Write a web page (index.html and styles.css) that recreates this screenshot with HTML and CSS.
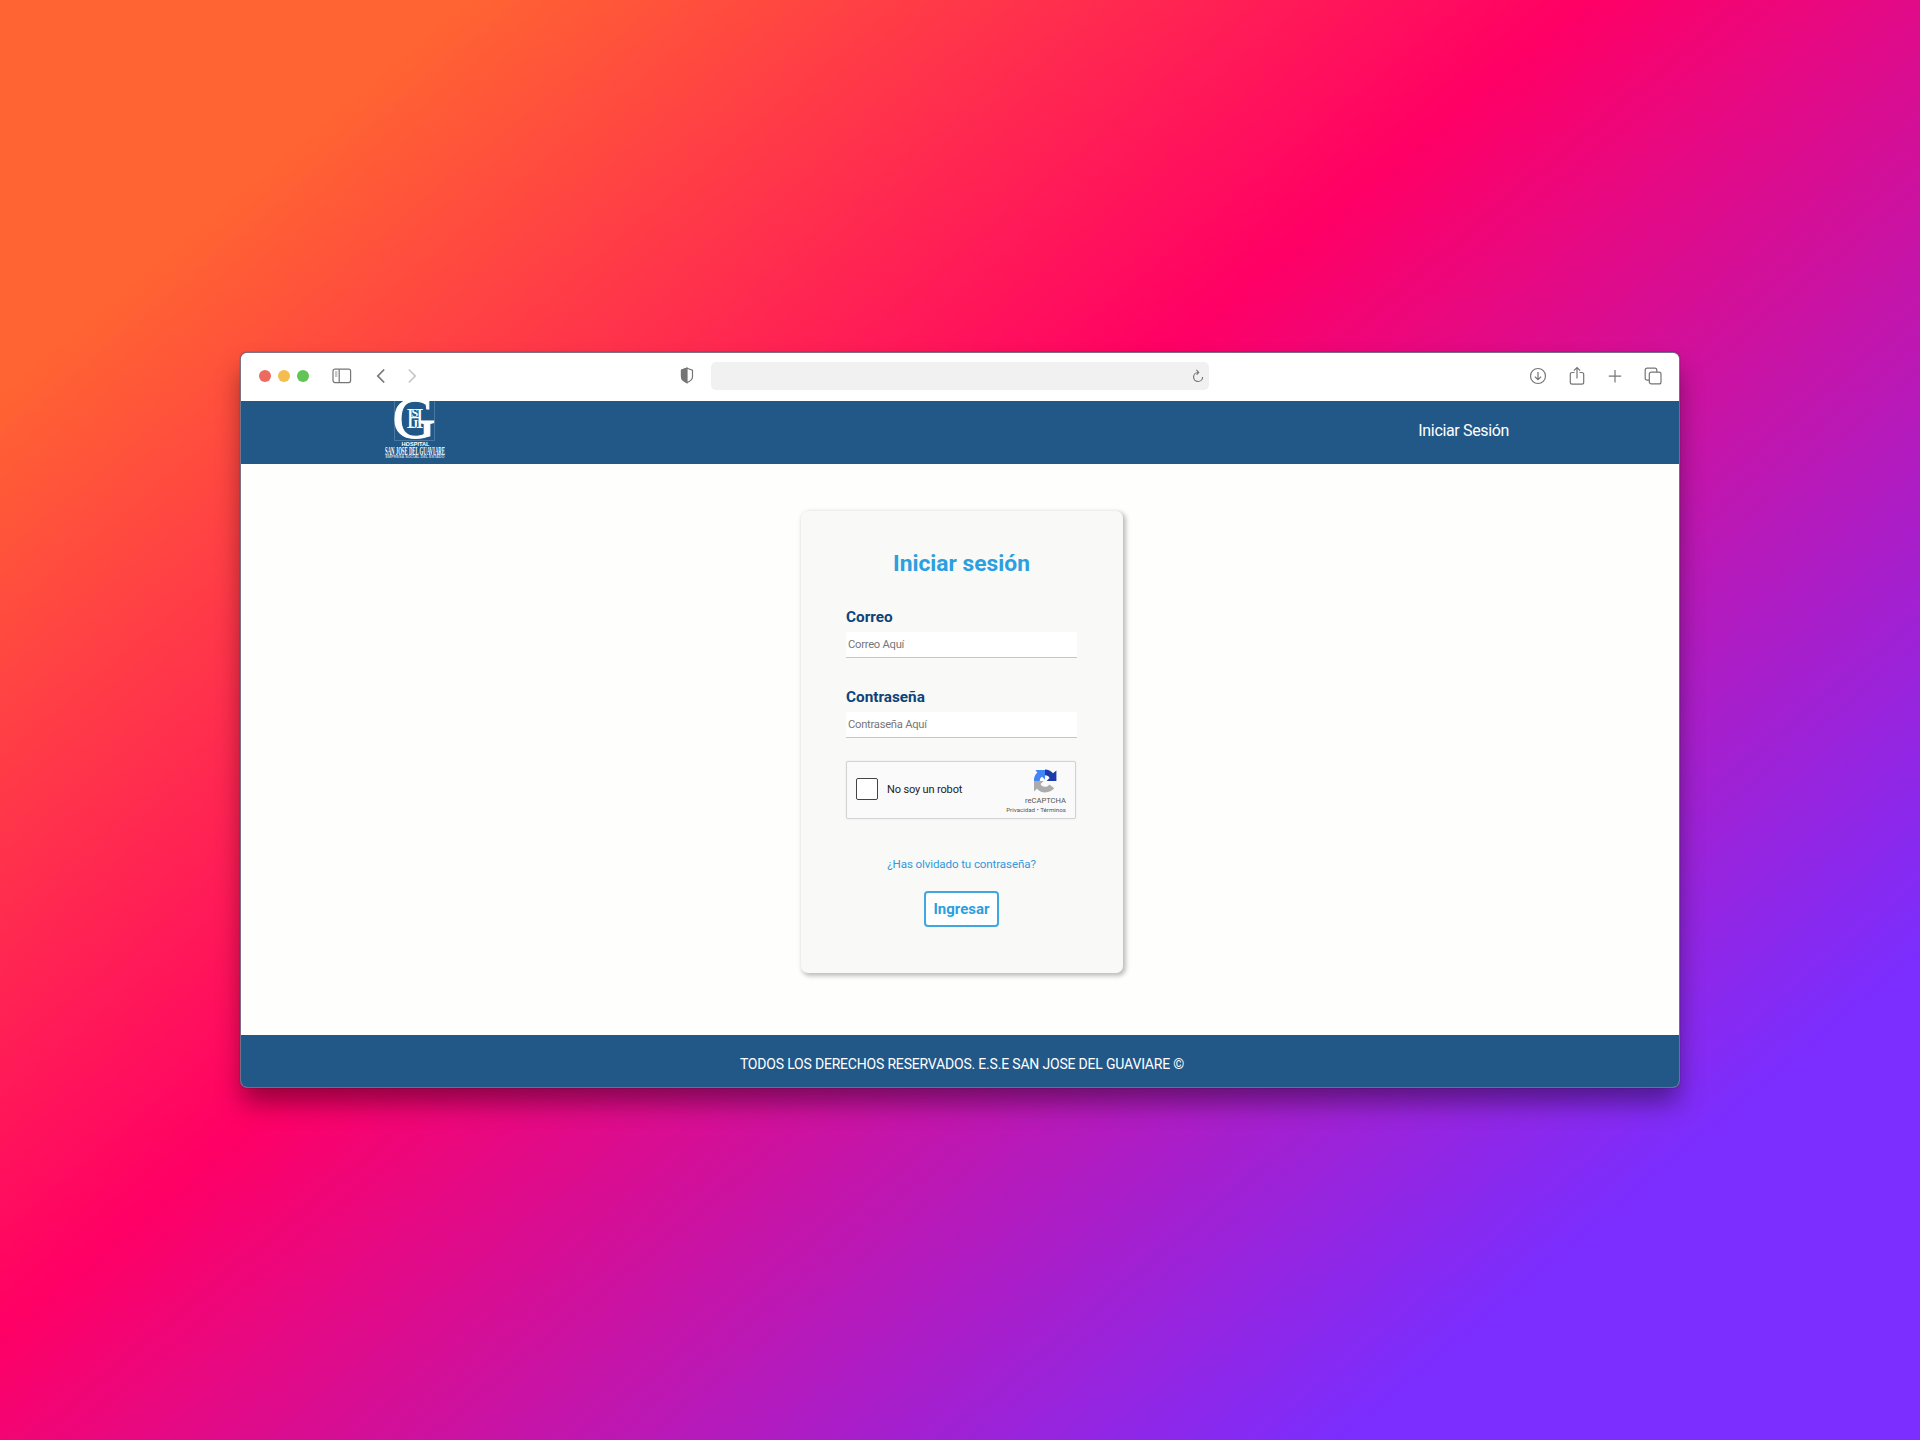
FILE: index.html
```html
<!DOCTYPE html>
<html lang="es">
<head>
<meta charset="utf-8">
<title>Iniciar sesión</title>
<link rel="stylesheet" href="styles.css">
</head>
<body>
<div class="window">
  <div class="toolbar">
    <div class="lights"><i class="light red"></i><i class="light yellow"></i><i class="light green"></i></div>
    <svg class="sidebar-icon" width="20" height="16" viewBox="0 0 20 16"><rect x="1" y="1.2" width="17.6" height="13.4" rx="2"/><path d="M7.2 1.2v13.4"/><path class="thin" d="M3 4h2.4M3 6h2.4M3 8h2.4"/></svg>
    <svg class="back-icon" width="10" height="16" viewBox="0 0 10 16"><path d="M8.200 1.500L1.800 8l6.400 6.500"/></svg>
    <svg class="forward-icon" width="10" height="16" viewBox="0 0 10 16"><path d="M1.800 1.500L8.200 8l-6.400 6.500"/></svg>
    <svg class="shield-icon" width="14" height="17" viewBox="0 0 14 17"><path d="M7 1.2l5.500 2v6.300c0 2.900-2.500 4.900-5.500 6.100C4 14.400 1.500 12.400 1.500 9.500V3.200z"/><path class="solid" d="M7 1.200v14.400C4 14.400 1.500 12.400 1.500 9.500V3.200z"/></svg>
    <div class="address">
      <svg width="12" height="14" viewBox="0 0 12 14"><path d="M6 3.500A4.500 4.500 0 1 0 10.600 8M4.400 .8L6.700 3.400 4.600 5.600"/></svg>
    </div>
    <div class="actions">
      <svg width="18" height="18" viewBox="0 0 18 18"><circle cx="9" cy="9" r="7.500"/><path d="M9 5v7.500M5.900 9.600L9 12.700l3.100-3.100"/></svg>
      <svg width="18" height="20" viewBox="0 0 18 20"><path d="M6.500 6.500H4.200Q2.300 6.500 2.300 8.400v7.900q0 1.900 1.900 1.900h9.600q1.900 0 1.900-1.900V8.400q0-1.900-1.900-1.900h-2.300M9 12.500V1.800M5.800 4.700L9 1.500l3.200 3.200"/></svg>
      <svg width="18" height="18" viewBox="0 0 18 18"><path d="M9 3v12.500M2.800 9.200h12.400"/></svg>
      <svg width="18" height="18" viewBox="0 0 18 18"><rect x="5.300" y="5.200" width="11.700" height="11.700" rx="2"/><path d="M5.300 13.200H3.200Q1.200 13.200 1.200 11.200v-8q0-2 2-2h7.600q2 0 2 2v2"/></svg>
    </div>
  </div>
  <header class="site-header">
    <svg class="logo" width="62" height="63" viewBox="0 0 62 63">
      <path class="logo-frame" d="M10.500 0v39.500h40V0"/>
      <text class="logo-g" x="8.500" y="37" textLength="43" lengthAdjust="spacingAndGlyphs">G</text>
      <text class="logo-h" x="22.500" y="27" textLength="17" lengthAdjust="spacingAndGlyphs">H</text>
      <text class="logo-s" x="27.500" y="16">S</text>
      <text class="logo-s" x="28" y="26.500">J</text>
      <text class="logo-hospital" x="17.500" y="44.500" textLength="28" lengthAdjust="spacingAndGlyphs">HOSPITAL</text>
      <text class="logo-name" x="1" y="54" textLength="60" lengthAdjust="spacingAndGlyphs">SAN JOSÉ DEL GUAVIARE</text>
      <text class="logo-sub" x="1.500" y="56.800" textLength="59" lengthAdjust="spacingAndGlyphs">EMPRESA SOCIAL DEL ESTADO</text>
    </svg>
    <a class="nav-link">Iniciar Sesión</a>
  </header>
  <main class="page">
    <form class="card">
      <h1>Iniciar sesión</h1>
      <label class="field"><span>Correo</span><input type="text" placeholder="Correo Aquí"></label>
      <label class="field"><span>Contraseña</span><input type="password" placeholder="Contraseña Aquí"></label>
      <div class="captcha">
        <span class="checkbox"></span>
        <span class="robot">No soy un robot</span>
        <div class="brand">
          <svg width="24" height="24" viewBox="0 0 24 24">
            <path fill="#1c3aa9" d="M12 .6C15.300 .6 18 2 20 4.300L23.400 1.500V12H13.600l3-3C15.700 7.200 14.500 6.200 12 6.200z"/>
            <path fill="#4285f4" d="M1 12C.7 8.500 2 5.500 4.300 3.800L2.500 1H12v9.600L9 7.700C7.600 8.400 6.900 9.700 6.700 12z"/>
            <path fill="#ababab" d="M1 12H10.600L7.600 15c1 2.300 2.700 2.700 4.400 2.700 2 0 3.400-.8 4.300-2.300l4.900 3.900C19 22 16 23.400 12 23.400c-3.300 0-6-1.200-8-3.600L1 22.500z"/>
          </svg>
          <span class="brand-name">reCAPTCHA</span>
          <span class="brand-legal">Privacidad • Términos</span>
        </div>
      </div>
      <a class="forgot">¿Has olvidado tu contraseña?</a>
      <button type="button">Ingresar</button>
    </form>
  </main>
  <footer>TODOS LOS DERECHOS RESERVADOS. E.S.E SAN JOSE DEL GUAVIARE ©</footer>
</div>
</body>
</html>
```
FILE: styles.css
```css
* { box-sizing: border-box; }
body {
  margin: 0;
  width: 1920px;
  height: 1440px;
  display: flex;
  align-items: center;
  justify-content: center;
  overflow: hidden;
  background: linear-gradient(140deg, rgb(255, 100, 50) 12.8%, rgb(255, 0, 101) 43.52%, rgb(123, 46, 255) 84.34%);
  font-family: Roboto, "Liberation Sans", sans-serif;
}
svg { display: block; flex: none; fill: none; }
.window {
  width: 1440px;
  height: 736px;
  border-radius: 7px;
  overflow: hidden;
  display: flex;
  flex-direction: column;
  background: #fefffd;
  background-clip: padding-box;
  border: 1px solid rgba(125, 145, 175, .75);
  box-shadow: 0 0 1px rgba(0, 0, 0, .6), 0 16px 26px -2px rgba(0, 0, 0, .42);
}
.toolbar {
  height: 48px;
  flex: none;
  display: flex;
  align-items: center;
  padding: 0 17px 3px 18px;
  background: #fff;
}
.toolbar svg { stroke: #757575; stroke-width: 1.2; }
.lights { display: flex; gap: 7px; }
.light { width: 12px; height: 12px; border-radius: 50%; }
.red { background: #ed6a5f; }
.yellow { background: #f5bd4f; }
.green { background: #61c454; }
.toolbar .sidebar-icon { margin-left: 23px; }
.toolbar .thin { stroke-width: .8; }
.toolbar .back-icon { margin-left: 24px; stroke-width: 1.7; }
.toolbar .forward-icon { margin-left: 21px; stroke: #c6c6c6; stroke-width: 1.7; }
.toolbar .shield-icon { margin-left: 263px; }
.solid { fill: #757575; }
.address {
  width: 498px;
  height: 28px;
  margin-left: 17px;
  padding-right: 5px;
  border-radius: 5px;
  background: #f1f1f1;
  display: flex;
  align-items: center;
  justify-content: flex-end;
}
.actions { margin-left: auto; display: flex; align-items: center; gap: 20.2px; }
.site-header {
  height: 63px;
  flex: none;
  background: #225888;
  display: flex;
  justify-content: space-between;
  padding: 0 170px 0 143px;
}
.logo { fill: #fff; font-family: "Liberation Serif", serif; }
.logo-frame { fill: none; stroke: #5d86aa; stroke-width: .7; }
.logo-g { font-size: 60px; stroke: #fff; stroke-width: 1; }
.logo-h { font-size: 30px; }
.logo-s { font-size: 12px; font-weight: bold; }
.logo-hospital { font: bold 5px "Liberation Sans", sans-serif; }
.logo-name { font-size: 12px; font-weight: bold; }
.logo-sub { font: bold 2.800px "Liberation Sans", sans-serif; opacity: .7; }
.nav-link { color: #fff; font-size: 16px; letter-spacing: -.35px; line-height: 60px; }
.page {
  flex: 1;
  display: flex;
  align-items: flex-start;
  justify-content: center;
  padding: 47px 0 0 4px;
}
.card {
  width: 322px;
  height: 462px;
  padding: 37px 46px 0 45px;
  border-radius: 7px;
  background: #f9f9f8;
  box-shadow: 2px 2px 4px 1px rgba(0, 0, 0, .25);
  display: flex;
  flex-direction: column;
}
h1 { margin: 0 0 25px; font-size: 22.800px; line-height: 32px; color: #2b9fdf; text-align: center; }
.field { display: flex; flex-direction: column; height: 80px; color: #0d4377; }
.field span { font-size: 15.300px; font-weight: bold; line-height: 24px; margin-bottom: 3px; }
.field input {
  height: 26px;
  width: 231px;
  border: 0;
  border-bottom: 1px solid #c4c7ca;
  padding: 0 2px;
  background: #fff;
  font: 11.200px Roboto, sans-serif;
  letter-spacing: -.25px;
  color: #333;
}
.field input::placeholder { color: #777; opacity: 1; }
.captcha {
  width: 230px;
  height: 58px;
  margin-top: -4px;
  padding: 0 9px;
  border: 1px solid #d3d3d3;
  border-radius: 2px;
  background: #fafafa;
  box-shadow: 0 0 2px rgba(0, 0, 0, .1);
  display: flex;
  align-items: center;
  flex: none;
}
.checkbox { width: 22px; height: 22px; border: 1.500px solid #444; border-radius: 2px; background: #fff; margin-top: -2px; }
.robot { margin: -1px 0 0 9px; font-size: 11px; letter-spacing: -.15px; color: #222; }
.brand {
  margin-left: auto;
  padding-top: 4px;
  display: flex;
  flex-direction: column;
  align-items: flex-end;
  color: #555;
}
.brand svg { margin-right: 9px; }
.brand-name { font-size: 7.600px; line-height: 10px; margin-top: 3px; }
.brand-legal { font-size: 6.200px; line-height: 9px; white-space: nowrap; }
.forgot { margin-top: 35px; font-size: 11.600px; letter-spacing: -.12px; line-height: 20px; color: #3498db; text-align: center; }
button {
  align-self: center;
  margin-top: 17px;
  width: 75px;
  height: 36px;
  padding: 0;
  border: 2px solid #3fa8df;
  border-radius: 4px;
  background: #fff;
  font: bold 15px Roboto, sans-serif;
  color: #2b9fdf;
}
footer {
  height: 52px;
  flex: none;
  padding-left: 4px;
  background: #225888;
  color: #fff;
  font-size: 14px;
  letter-spacing: -.19px;
  line-height: 58px;
  text-align: center;
}
```
